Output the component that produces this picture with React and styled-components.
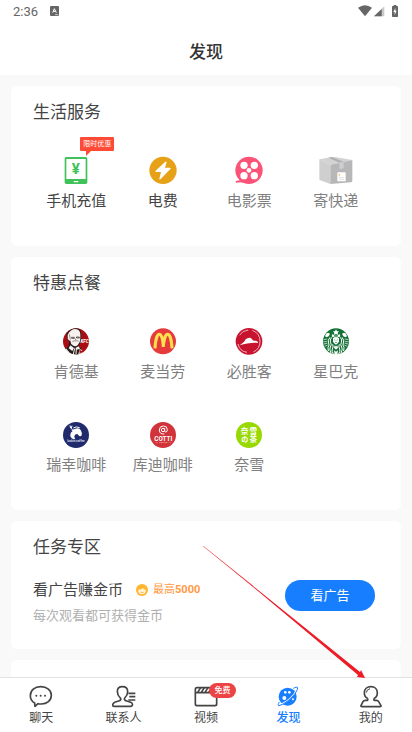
import React from 'react';
import styled, { createGlobalStyle } from 'styled-components';

const GlobalStyle = createGlobalStyle`
    * {
        box-sizing: border-box;
    }
    body {
        margin: 0;
        background: #f9f9f9;
        font-family: Roboto, 'Noto Sans CJK SC', sans-serif;
        color: #444;
    }
    a {
        color: inherit;
        text-decoration: none;
    }
    h1, h2, h3, p {
        margin: 0;
        font-weight: 400;
    }
    svg {
        display: block;
    }
`

/* service icons */

const PhoneIcon = () => (
    <Icon viewBox="0 0 84 84">
        <rect x="8" y="3" width="68" height="81" rx="5" fill="#3fc257" />
        <rect x="13" y="9" width="58" height="60" rx="1" fill="#fff" />
        <rect x="35" y="75" width="14" height="4" rx="1" fill="#fff" />
        <Glyph x="41" y="54" size="45" fill="#3fc257">¥</Glyph>
    </Icon>
);

const PowerIcon = () => (
    <Icon viewBox="0 0 84 84">
        <circle cx="42" cy="43" r="41" fill="#e6a117" />
        <path d="M49 17L19 45Q18 48 22 48L36 48L31 68Q31 72 35 69L65 38Q66 35 62 35L48 35L53 19Q52 15 49 17Z" fill="#fff" />
    </Icon>
);

const FilmIcon = () => (
    <Icon viewBox="0 0 84 84">
        <circle cx="42" cy="43" r="41" fill="#fb5377" />
        <path d="M0 62L13 73L2 75Z" fill="#fff" />
        <path d="M2 75L14 73L30 81L16 79L3 80Z" fill="#fb5377" />
        <g fill="#fff">
            <circle cx="27" cy="28" r="11" />
            <circle cx="58" cy="28" r="11" />
            <circle cx="27" cy="59" r="11" />
            <circle cx="58" cy="59" r="11" />
            <circle cx="42" cy="43" r="7" />
        </g>
    </Icon>
);

const ParcelIcon = () => (
    <Icon viewBox="0 0 102 84" wide>
        <path d="M1 10L34 26V84L4 73Q1 72 1 69Z" fill="#cfcfcf" />
        <path d="M1 10L40 3Q46 2 52 4L100 12L34 26Z" fill="#d3d3d3" />
        <path d="M34 26L100 12V74Q100 78 96 79L34 84Z" fill="#b7b7b7" />
        <path d="M28 5L38 3L74 17L62 20Z" fill="#b0b0b0" />
        <path d="M61 20L74 17V36L67 39L61 38Z" fill="#cbced3" />
        <rect x="55" y="49" width="25" height="27" rx="2" fill="#fff" />
        <path d="M59 55H64M59 59H63" stroke="#f3c76c" strokeWidth="3" />
        <path d="M60 65H75M60 70H75" stroke="#d5d5d5" strokeWidth="2" />
    </Icon>
);

/* restaurant logos */

const KfcLogo = () => (
    <Icon viewBox="0 0 84 84">
        <circle cx="42" cy="43" r="39" fill="#a90d13" />
        <path d="M14 20Q24 5 42 4Q56 4 57 18L58 36Q57 50 49 57L58 65L50 82Q36 84 22 77L10 65L20 57L22 42Q16 40 15 32Z" fill="#241c1b" />
        <path d="M17 23Q25 6 41 6Q54 7 55 22L55 34Q55 46 48 53Q41 61 32 55Q26 51 25 41Q17 40 17 32Z" fill="#f6f1ee" />
        <path d="M28 31H37V34H29ZM43 30H52V33H44Z" fill="none" stroke="#241c1b" strokeWidth="2" />
        <path d="M22 22L25 38M39 34L42 40M31 44Q36 40 41 42Q46 40 50 43" fill="none" stroke="#6b5f5c" strokeWidth="2" />
        <path d="M25 55L36 63L31 72L20 64ZM40 63L50 58L54 65L44 68Z" fill="#f6f1ee" />
        <path d="M38 64L34 82M43 66L42 82" stroke="#f6f1ee" strokeWidth="3" />
        <path d="M12 64L27 82Q18 79 12 70ZM53 66L61 70L57 79L49 82Z" fill="#f6f1ee" />
        <path d="M52 68L62 73L53 80Z" fill="#a90d13" />
        <Glyph x="68" y="48" size="14" italic fill="#fff">KFC</Glyph>
    </Icon>
);

const McLogo = () => (
    <Icon viewBox="0 0 84 84">
        <circle cx="42" cy="43" r="39" fill="#e63a3b" />
        <path d="M18 64C19 42 24 22 31 22C38 22 42 40 43 60C44 40 49 22 56 22C63 22 68 42 69 64" fill="none" stroke="#ffe04d" strokeWidth="9" />
    </Icon>
);

const PizzaLogo = () => (
    <Icon viewBox="0 0 84 84">
        <circle cx="42" cy="43" r="40" fill="#c8132f" />
        <path d="M14 24Q22 11 40 9M52 10Q75 19 75 43Q75 66 55 75M9 51Q14 73 36 76" fill="none" stroke="#fff" strokeWidth="2" />
        <path d="M14 55C21 48 28 46 31 38C34 35 41 30 47 33C53 36 51 41 58 41C65 41 70 43 69 48C52 46 32 50 14 55Z" fill="#fff" />
    </Icon>
);

const StarbucksLogo = () => (
    <Icon viewBox="0 0 84 84">
        <circle cx="42" cy="43" r="39" fill="#127236" />
        <path d="M42 7L45 13L51 13L47 18L48 24L42 21L36 24L37 18L33 13L39 13Z" fill="#fff" />
        <path d="M29 27L32 20L37 26H47L52 20L55 27L52 31Q42 25 32 31Z" fill="#fff" />
        <path d="M12 20L18 17L24 20L20 28L14 31L9 28ZM72 20L66 17L60 20L64 28L70 31L75 28Z" fill="#fff" />
        <path d="M33 33Q42 27 51 33V43Q49 51 42 53Q35 51 33 43Z" fill="#fff" />
        <path d="M37 39H40M44 39H47M39 46H45" stroke="#127236" strokeWidth="2" />
        <path d="M29 31Q22 39 26 47Q30 53 25 60Q21 67 27 78M24 31Q16 40 20 48Q23 54 18 61L19 72M32 52Q35 60 31 66Q28 72 34 81M55 31Q62 39 58 47Q54 53 59 60Q63 67 57 78M60 31Q68 40 64 48Q61 54 66 61L65 72M52 52Q49 60 53 66Q56 72 50 81" fill="none" stroke="#fff" strokeWidth="3" />
        <path d="M5 38L16 36M4 44L16 44M5 51L16 49M8 58L17 54M79 38L68 36M80 44L68 44M79 51L68 49M76 58L67 54" stroke="#fff" strokeWidth="2" />
        <path d="M38 55L42 59L46 55L48 62L42 68L36 62ZM36 70L42 74L48 70L46 83H38Z" fill="#fff" />
    </Icon>
);

const LuckinLogo = () => (
    <Icon viewBox="0 0 84 84">
        <circle cx="42" cy="45" r="39" fill="#1f2b6c" />
        <path d="M32 29Q24 26 24 16M28 24L30 17M34 24Q42 18 53 23" fill="none" stroke="#fff" strokeWidth="3" />
        <path d="M28 31L40 26Q52 23 56 30Q61 38 59 46Q56 51 51 47L46 42Q38 42 37 49Q37 54 40 58Q28 58 25 48Q24 38 32 33Z" fill="#fff" />
        <Glyph x="42" y="67" size="9" fill="#d9dcec">luckin coffee</Glyph>
    </Icon>
);

const CottiLogo = () => (
    <Icon viewBox="0 0 84 84">
        <circle cx="42" cy="45" r="39" fill="#d2333a" />
        <path d="M46 42Q31 43 31 30Q31 18 43 18Q55 18 55 29Q55 36 50 36Q47 36 47 32V25" fill="none" stroke="#fff" strokeWidth="3" />
        <circle cx="42" cy="30" r="5" fill="none" stroke="#fff" strokeWidth="3" />
        <Glyph x="43" y="62" size="19" fill="#fff">COTTI</Glyph>
        <Glyph x="43" y="70" size="7" fill="#f3b8ba">COFFEE</Glyph>
        <path d="M19 68H27M59 68H67" stroke="#f3b8ba" strokeWidth="1" />
    </Icon>
);

const NayukiLogo = () => (
    <Icon viewBox="0 0 84 84">
        <circle cx="42" cy="45" r="39" fill="#98d803" />
        <Glyph x="29" y="42" size="23" fill="#fff">奈</Glyph>
        <Glyph x="55" y="42" size="23" fill="#fff">雪</Glyph>
        <Glyph x="29" y="66" size="21" fill="#fff">の</Glyph>
        <Glyph x="55" y="67" size="23" fill="#fff">茶</Glyph>
    </Icon>
);

const CoinIcon = () => (
    <svg width="12" height="12" viewBox="0 0 36 36" aria-hidden="true">
        <circle cx="18" cy="18" r="18" fill="#ffb52e" />
        <path d="M7 17Q18 17 20 12Q24 17 29 17V24Q27 31 18 31Q9 31 7 24Z" fill="#fff3d8" />
        <path d="M13 24Q18 28 24 24" fill="none" stroke="#ff9c2e" strokeWidth="2" />
    </svg>
);

/* tab bar icons */

const ChatIcon = () => (
    <TabSvg>
        <path d="M17 57C8 52 4 44 4 35C4 19 17 8 35 8C54 8 67 19 67 34C67 50 54 60 37 60C33 60 30 60 27 59L18 67Z" />
        <g fill="currentColor" stroke="none">
            <circle cx="22" cy="35" r="3" />
            <circle cx="35" cy="35" r="3" />
            <circle cx="48" cy="35" r="3" />
        </g>
    </TabSvg>
);

const ContactsIcon = () => (
    <TabSvg>
        <path d="M25 42C19 36 16 29 16 23C16 13 22 8 31 8C41 8 47 14 47 23C47 30 43 37 38 42C36 46 38 49 44 51L56 55C61 57 62 61 61 64Q60 67 56 67H7Q2 67 2 63C2 58 5 56 10 54L20 51C26 49 28 46 25 42Z" />
        <path d="M49 28H70M52 38H70M49 48H70" />
    </TabSvg>
);

const VideoIcon = () => (
    <TabSvg>
        <rect x="4" y="11" width="64" height="54" rx="5" />
        <path d="M4 26H68M11 25L20 11M22 25L31 11M33 25L42 11M44 25L53 11M55 25L64 11" />
    </TabSvg>
);

const DiscoverIcon = () => (
    <TabSvg>
        <circle cx="35" cy="38" r="27" fill="currentColor" stroke="none" />
        <g fill="#fff" stroke="none">
            <circle cx="28" cy="25" r="4" />
            <circle cx="40" cy="25" r="4" />
            <circle cx="25" cy="42" r="6" />
            <circle cx="51" cy="46" r="3" />
        </g>
        <path d="M60 20C54 35 34 54 14 61" stroke="#fff" strokeWidth="4" />
        <path d="M52 13C60 9 65 8 65 12C66 23 35 57 12 64C6 67 5 64 8 58L10 54" strokeWidth="3" />
    </TabSvg>
);

const MeIcon = () => (
    <TabSvg>
        <path d="M26 43C19 40 16 33 16 26C16 15 24 8 36 8C47 8 55 15 55 26C55 33 52 40 45 43M26 43V49H19Q14 49 12 53L6 65Q5 68 9 68H63Q67 68 66 65L59 53Q57 49 52 49H45V43" />
        <path d="M22 26Q23 16 33 14" strokeWidth="3" />
    </TabSvg>
);

const services = [
    { name: '手机充值', icon: PhoneIcon, dark: true, tip: '限时优惠' },
    { name: '电费', icon: PowerIcon, dark: true },
    { name: '电影票', icon: FilmIcon },
    { name: '寄快递', icon: ParcelIcon },
];

const meals = [
    { name: '肯德基', icon: KfcLogo },
    { name: '麦当劳', icon: McLogo },
    { name: '必胜客', icon: PizzaLogo },
    { name: '星巴克', icon: StarbucksLogo },
    { name: '瑞幸咖啡', icon: LuckinLogo },
    { name: '库迪咖啡', icon: CottiLogo },
    { name: '奈雪', icon: NayukiLogo },
];

const tabs = [
    { name: '聊天', icon: ChatIcon },
    { name: '联系人', icon: ContactsIcon },
    { name: '视频', icon: VideoIcon, badge: '免费' },
    { name: '发现', icon: DiscoverIcon, active: true },
    { name: '我的', icon: MeIcon },
];

const ServiceCard = ({ title, items }) => (
    <Card>
        <CardTitle>{title}</CardTitle>
        <Grid>
            {items.map(({ name, icon: Picture, dark, tip }) => (
                <Item key={name} href="#" $dark={dark}>
                    <IconBox>
                        <Picture />
                        {tip && <Tip>{tip}</Tip>}
                    </IconBox>
                    {name}
                </Item>
            ))}
        </Grid>
    </Card>
);

const StatusBar = () => (
    <Status>
        <span>2:36</span>
        <svg width="9" height="10" viewBox="0 0 27 30" aria-hidden="true">
            <rect width="27" height="30" rx="3" fill="#666" />
            <path d="M8 20L13 8L19 20M10 16H17" fill="none" stroke="#fff" strokeWidth="3" />
            <path d="M15 26H24" stroke="#fff" strokeWidth="2" />
        </svg>
        <StatusIcons>
            <svg width="14" height="12" viewBox="0 0 42 36" aria-hidden="true">
                <path d="M0 8Q21 -7 42 8L21 34Z" fill="#666" />
            </svg>
            <svg width="11" height="12" viewBox="0 0 33 36" aria-hidden="true">
                <path d="M0 34L31 4V34Z" fill="#c9c9c9" />
                <path d="M0 34L23 12V34Z" fill="#666" />
            </svg>
            <Battery width="6" height="12" viewBox="0 0 18 36" aria-hidden="true">
                <path d="M5 0H13V3H16Q18 3 18 5V34Q18 36 16 36H2Q0 36 0 34V5Q0 3 2 3H5Z" fill="#666" />
                <path d="M10 9L4 21H8V30L14 17H10Z" fill="#fff" />
            </Battery>
        </StatusIcons>
    </Status>
);

const App = () => {
    return (
        <Screen>
            <GlobalStyle />
            <Header>
                <StatusBar />
                <PageTitle>发现</PageTitle>
            </Header>
            <Content>
                <ServiceCard title="生活服务" items={services} />
                <ServiceCard title="特惠点餐" items={meals} />
                <Card>
                    <CardTitle>任务专区</CardTitle>
                    <Task>
                        <div>
                            <TaskTitle>
                                看广告赚金币
                                <Reward>
                                    <CoinIcon />
                                    <span>最高<b>5000</b></span>
                                </Reward>
                            </TaskTitle>
                            <TaskNote>每次观看都可获得金币</TaskNote>
                        </div>
                        <WatchButton type="button">看广告</WatchButton>
                    </Task>
                </Card>
                <Card />
            </Content>
            <TabBar>
                {tabs.map(({ name, icon: Picture, active, badge }) => (
                    <Tab key={name} href="#" $active={active} aria-current={active ? 'page' : undefined}>
                        <TabIcon>
                            <Picture />
                            {badge && <Badge>{badge}</Badge>}
                        </TabIcon>
                        {name}
                    </Tab>
                ))}
                <Arrow width="162" height="132" viewBox="0 0 162 132" aria-hidden="true">
                    <path d="M0 0L50 40L157 126L158 124L162 132L154 131L155 129L50 41Z" fill="#ee1c25" />
                    <path d="M0 0L50 40" stroke="#ee1c25" strokeOpacity="0.5" />
                </Arrow>
            </TabBar>
        </Screen>
    );
};

const Screen = styled.div`
    display: flex;
    flex-direction: column;
    height: 100vh;
`

const Header = styled.header`
    flex: none;
    background: #fff;
    padding-bottom: 10px;
`

const Status = styled.div`
    display: flex;
    align-items: center;
    gap: 12px;
    height: 22px;
    padding: 0 14px 0 13px;
    font-size: 13px;
    color: #666;
`

const StatusIcons = styled.div`
    display: flex;
    align-items: center;
    gap: 2px;
    margin-left: auto;
`

const Battery = styled.svg`
    margin-left: 5px;
`

const PageTitle = styled.h1`
    margin-top: 17px;
    font-size: 17px;
    line-height: 26px;
    font-weight: 500;
    text-align: center;
    color: #333;
`

const Content = styled.main`
    display: flex;
    flex: 1;
    flex-direction: column;
    gap: 11px;
    min-height: 0;
    padding: 11px;
    overflow-y: auto;
    scrollbar-width: none;
`

const Card = styled.section`
    flex: none;
    min-height: 128px;
    padding: 13px 22px 0;
    border-radius: 6px;
    background: #fff;
`

const CardTitle = styled.h2`
    font-size: 17px;
    line-height: 26px;
`

const Grid = styled.div`
    display: grid;
    grid-template-columns: repeat(4, 1fr);
    row-gap: 36px;
    padding: 31px 0 33px;
`

const Item = styled.a`
    display: flex;
    flex-direction: column;
    align-items: center;
    gap: 5px;
    font-size: 15px;
    line-height: 24px;
    color: ${props => props.$dark ? '#444' : '#808080'};
`

const IconBox = styled.span`
    position: relative;
    display: flex;
    justify-content: center;
`

const IconSvg = styled.svg`
    width: ${props => props.$wide ? '34px' : '28px'};
    height: 28px;
`

const Icon = ({ viewBox, wide, children }) => (
    <IconSvg viewBox={viewBox} $wide={wide} aria-hidden="true">{children}</IconSvg>
);

const GlyphText = styled.text`
    font-family: Roboto, 'Noto Sans CJK SC', sans-serif;
    font-size: ${props => props.$size}px;
    font-style: ${props => props.$italic ? 'italic' : 'normal'};
    font-weight: 700;
    text-anchor: middle;
`

const Glyph = ({ size, italic, ...rest }) => <GlyphText $size={size} $italic={italic} {...rest} />;

const Tip = styled.span`
    position: absolute;
    left: 18px;
    top: -19px;
    width: 34px;
    border-radius: 1px;
    background: #ff4a35;
    color: #fff;
    font-size: 7px;
    line-height: 14px;
    text-align: center;
    white-space: nowrap;

    &::after {
        content: '';
        position: absolute;
        left: 6px;
        top: 100%;
        border-top: 5px solid #ff4a35;
        border-right: 5px solid transparent;
    }
`

const Task = styled.div`
    display: flex;
    align-items: flex-start;
    justify-content: space-between;
    padding: 18px 4px 22px 0;
`

const TaskTitle = styled.h3`
    display: flex;
    align-items: center;
    gap: 13px;
    font-size: 15px;
    line-height: 24px;
`

const Reward = styled.span`
    display: flex;
    align-items: center;
    gap: 5px;
    font-size: 11px;
    color: #ff9a45;
`

const TaskNote = styled.p`
    margin-top: 3px;
    font-size: 13px;
    line-height: 22px;
    color: #b0b0b0;
`

const WatchButton = styled.button`
    width: 90px;
    height: 31px;
    margin-top: 2px;
    padding: 0 0 2px;
    border: 0;
    border-radius: 16px;
    background: #177fff;
    color: #fff;
    font-family: inherit;
    font-size: 13px;
`

const TabBar = styled.nav`
    position: relative;
    display: flex;
    flex: none;
    padding: 6px 0;
    border-top: 1px solid #e2e2e2;
    background: #fff;
`

const Tab = styled.a`
    display: flex;
    flex: 1;
    flex-direction: column;
    align-items: center;
    gap: 2px;
    font-size: 12px;
    line-height: 16px;
    font-weight: ${props => props.$active ? 500 : 400};
    color: ${props => props.$active ? '#177fff' : '#444'};
`

const TabIcon = styled.span`
    position: relative;
`

const TabSvg = styled.svg.attrs({ viewBox: '0 0 72 72', 'aria-hidden': true })`
    width: 24px;
    height: 24px;
    fill: none;
    stroke: currentColor;
    stroke-width: 5px;
    stroke-linejoin: round;
`

const Badge = styled.span`
    position: absolute;
    left: 15px;
    top: -1px;
    width: 27px;
    border-radius: 8px;
    background: #ee4344;
    color: #fff;
    font-size: 8px;
    line-height: 15px;
    font-weight: 500;
    text-align: center;
`

const Arrow = styled.svg`
    position: absolute;
    right: 47px;
    bottom: 100%;
    pointer-events: none;
`

export default App;
